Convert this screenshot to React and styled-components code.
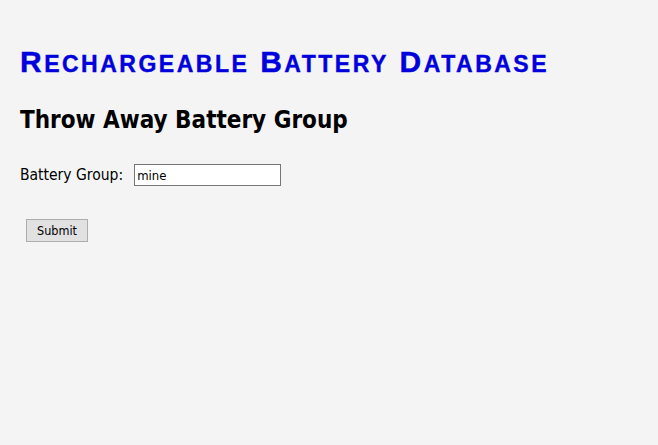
import React from 'react';
import styled, { createGlobalStyle } from 'styled-components';

const GlobalStyle = createGlobalStyle`
  html, body {
    margin: 0;
    background-color: #f4f4f4;
  }
  body {
    font-family: "DejaVu Sans Condensed", "DejaVu Sans", Tahoma, sans-serif;
  }
`;

const Page = styled.div`
  padding: 44px 20px 0 20px;
`;

const Title = styled.h1`
  margin: 0;
  font-family: "Liberation Sans", Arial, sans-serif;
  font-size: 30px;
  line-height: 36px;
  font-weight: bold;
  letter-spacing: 2.5px;
  color: #0000dd;
  -webkit-text-stroke: 0.4px #0000dd;
`;

const Small = styled.span`
  font-size: 23px;
  text-transform: uppercase;
`;

const Heading = styled.h2`
  margin: 23px 0 0 0;
  font-family: "DejaVu Sans Condensed", "DejaVu Sans", Tahoma, sans-serif;
  font-size: 24px;
  line-height: 30px;
  font-weight: bold;
  color: #000;
`;

const Form = styled.form`
  margin-top: 29px;
`;

const Row = styled.div`
  display: flex;
  align-items: center;
  gap: 11px;
  font-size: 15.5px;
`;

const Label = styled.label`
  color: #000;
`;

const TextInput = styled.input`
  width: 147px;
  height: 22px;
  box-sizing: border-box;
  border: 1px solid #767676;
  background: #fff;
  padding: 0 2px;
  font-family: "DejaVu Sans Condensed", "DejaVu Sans", Tahoma, sans-serif;
  font-size: 13px;
`;

const SubmitButton = styled.button`
  margin: 33px 0 0 6px;
  width: 62px;
  height: 23px;
  background: #e1e1e1;
  border: 1px solid #adadad;
  font-family: "DejaVu Sans Condensed", "DejaVu Sans", Tahoma, sans-serif;
  font-size: 12.5px;
  color: #000;
  padding: 0;
`;

const SmallCapsWord = ({ word }) => (
  <>
    {word[0]}
    <Small>{word.slice(1)}</Small>
  </>
);

export default function App() {
  return (
    <>
      <GlobalStyle />
      <Page>
        <Title>
          <SmallCapsWord word="Rechargeable" /> <SmallCapsWord word="Battery" />{' '}
          <SmallCapsWord word="Database" />
        </Title>
        <Heading>Throw Away Battery Group</Heading>
        <Form onSubmit={(e) => e.preventDefault()}>
          <Row>
            <Label htmlFor="group">Battery Group:</Label>
            <TextInput id="group" defaultValue="mine" />
          </Row>
          <SubmitButton type="submit">Submit</SubmitButton>
        </Form>
      </Page>
    </>
  );
}
